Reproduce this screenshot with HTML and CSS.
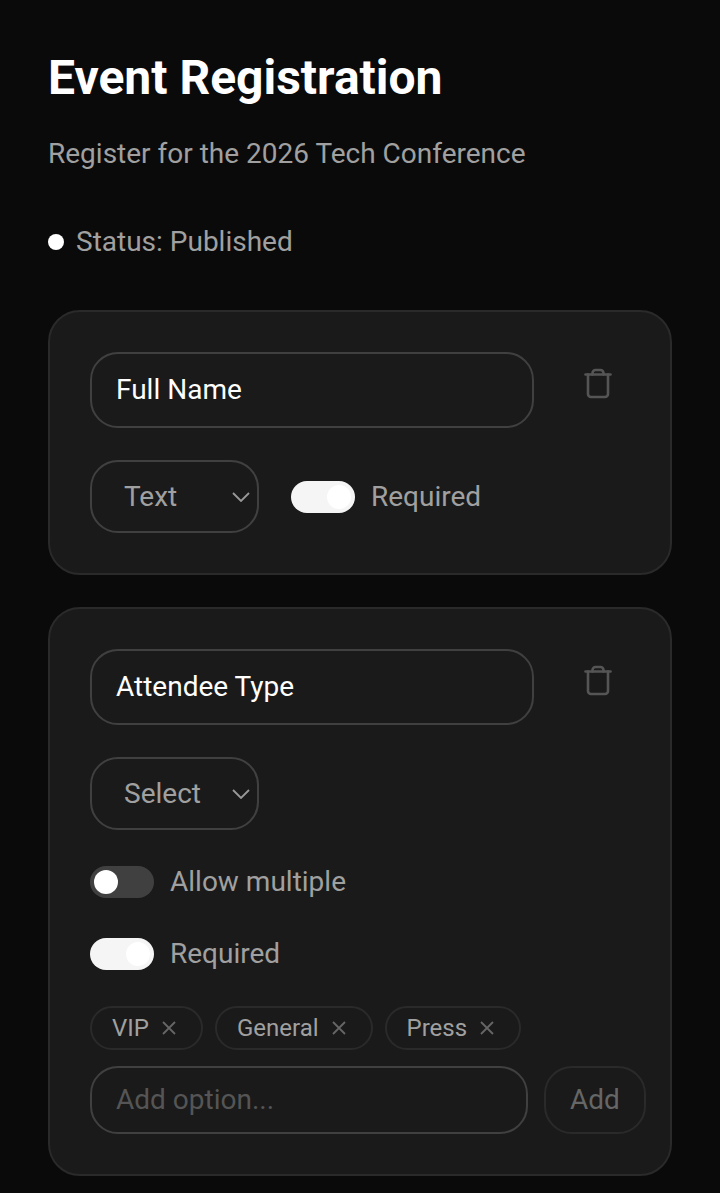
FILE: index.html
```html
<!DOCTYPE html>
<html lang="en">
<head>
    <meta charset="UTF-8">
    <meta name="viewport" content="width=device-width, initial-scale=1.0">
    <title>Event Registration</title>
    <link rel="stylesheet" href="styles.css">
</head>
<body>
    <div class="page">
        <h1>Event Registration</h1>
        <p class="subtitle">Register for the 2026 Tech Conference</p>

        <div class="status">
            <span class="dot"></span>
            <span>Status: Published</span>
        </div>

        <div class="card">
            <div class="name-row">
                <div class="input">Full Name</div>
                <button class="delete" aria-label="Delete field">
                    <svg width="28" height="32" viewBox="0 0 28 32" fill="none" stroke="#555" stroke-width="2.6" stroke-linejoin="round" stroke-linecap="round">
                        <path d="M1.500 6.500h25"/>
                        <path d="M8.500 6.500V5a3 3 0 0 1 3-3h5a3 3 0 0 1 3 3v1.500"/>
                        <path d="M4 6.500V26a3 3 0 0 0 3 3h14a3 3 0 0 0 3-3V6.500"/>
                    </svg>
                </button>
            </div>
            <div class="type-row">
                <div class="select select-text">
                    Text
                    <svg class="chevron" width="18" height="10" viewBox="0 0 18 10" fill="none" stroke="#999" stroke-width="1.8"><path d="M1 1l8 8 8-8"/></svg>
                </div>
                <div class="toggle on"><span class="knob"></span></div>
                <span class="toggle-label">Required</span>
            </div>
        </div>

        <div class="card">
            <div class="name-row">
                <div class="input">Attendee Type</div>
                <button class="delete" aria-label="Delete field">
                    <svg width="28" height="32" viewBox="0 0 28 32" fill="none" stroke="#555" stroke-width="2.6" stroke-linejoin="round" stroke-linecap="round">
                        <path d="M1.500 6.500h25"/>
                        <path d="M8.500 6.500V5a3 3 0 0 1 3-3h5a3 3 0 0 1 3 3v1.500"/>
                        <path d="M4 6.500V26a3 3 0 0 0 3 3h14a3 3 0 0 0 3-3V6.500"/>
                    </svg>
                </button>
            </div>
            <div class="select select-option">
                Select
                <svg class="chevron" width="18" height="10" viewBox="0 0 18 10" fill="none" stroke="#999" stroke-width="1.8"><path d="M1 1l8 8 8-8"/></svg>
            </div>
            <div class="switch-row first">
                <div class="toggle"><span class="knob"></span></div>
                <span class="toggle-label">Allow multiple</span>
            </div>
            <div class="switch-row">
                <div class="toggle on"><span class="knob"></span></div>
                <span class="toggle-label">Required</span>
            </div>
            <div class="chips">
                <span class="chip">VIP <svg width="16" height="16" viewBox="0 0 16 16" stroke="#666" stroke-width="1.800"><path d="M2 2l12 12M14 2L2 14"/></svg></span>
                <span class="chip">General <svg width="16" height="16" viewBox="0 0 16 16" stroke="#666" stroke-width="1.800"><path d="M2 2l12 12M14 2L2 14"/></svg></span>
                <span class="chip">Press <svg width="16" height="16" viewBox="0 0 16 16" stroke="#666" stroke-width="1.800"><path d="M2 2l12 12M14 2L2 14"/></svg></span>
            </div>
            <div class="add-row">
                <div class="input add-input">Add option...</div>
                <button class="add">Add</button>
            </div>
        </div>
    </div>
</body>
</html>
```

FILE: styles.css
```css
* {
    box-sizing: border-box;
}

html, body {
    height: 100%;
}

body {
    margin: 0;
    background-color: #0a0a0a;
    font-family: 'Roboto', sans-serif;
    overflow: hidden;
}

.page {
    padding: 48px 48px 0;
}

h1 {
    margin: 0;
    color: #ffffff;
    font-size: 48px;
    font-weight: 700;
    line-height: 60px;
}

.subtitle {
    margin: 25px 0 0;
    color: #a0a0a0;
    font-size: 28px;
    line-height: 42px;
}

.status {
    display: flex;
    align-items: center;
    gap: 12px;
    margin-top: 46px;
    color: #a0a0a0;
    font-size: 28px;
    line-height: 42px;
}

.dot {
    width: 16px;
    height: 16px;
    border-radius: 50%;
    background-color: #ffffff;
}

.card {
    margin-top: 32px;
    padding: 40px;
    background-color: #1a1a1a;
    border: 2px solid #2a2a2a;
    border-radius: 32px;
}

.status + .card {
    margin-top: 47px;
}

.name-row {
    display: flex;
    align-items: flex-start;
    gap: 32px;
}

.input {
    flex: 1;
    height: 76px;
    padding: 0 24px 2px;
    display: flex;
    align-items: center;
    color: #ffffff;
    font-size: 28px;
    font-weight: 400;
    border: 2px solid #404040;
    border-radius: 28px;
}

.delete {
    width: 64px;
    height: 64px;
    padding: 0;
    display: flex;
    align-items: center;
    justify-content: center;
    background: none;
    border: none;
}

.type-row {
    display: flex;
    align-items: center;
    gap: 32px;
    margin-top: 32px;
}

.select {
    position: relative;
    width: 169px;
    height: 73px;
    display: flex;
    align-items: center;
    color: #a0a0a0;
    font-size: 28px;
    border: 2px solid #404040;
    border-radius: 28px;
}

.select-text {
    padding-left: 32px;
}

.select-option {
    padding-left: 32px;
    margin-top: 32px;
}

.chevron {
    position: absolute;
    right: 7px;
    top: 30px;
}

.toggle {
    position: relative;
    flex: none;
    width: 64px;
    height: 32px;
    background-color: #404040;
    border-radius: 16px;
}

.toggle.on {
    background-color: #f5f5f5;
}

.knob {
    position: absolute;
    top: 4px;
    left: 4px;
    width: 24px;
    height: 24px;
    border-radius: 50%;
    background-color: #ffffff;
}

.toggle.on .knob {
    left: 36px;
}

.toggle-label {
    color: #a0a0a0;
    font-size: 28px;
    line-height: 32px;
}

.type-row .toggle-label {
    margin-left: -16px;
}

.switch-row {
    display: flex;
    align-items: center;
    gap: 16px;
    margin-top: 40px;
}

.switch-row.first {
    margin-top: 36px;
}

.chips {
    display: flex;
    gap: 12px;
    margin-top: 36px;
}

.chip {
    height: 44px;
    padding: 0 24px 0 20px;
    display: flex;
    align-items: center;
    gap: 12px;
    color: #a0a0a0;
    font-size: 24px;
    border: 2px solid #2a2a2a;
    border-radius: 22px;
}

.add-row {
    display: flex;
    gap: 16px;
    margin-top: 16px;
    width: 556px;
}

.add-input {
    height: 68px;
    flex: none;
    width: 438px;
    color: #555555;
}

.add {
    width: 102px;
    height: 68px;
    flex: none;
    padding: 0 0 2px;
    color: #666666;
    font-family: 'Roboto', sans-serif;
    font-size: 28px;
    background: none;
    border: 2px solid #2a2a2a;
    border-radius: 28px;
}
```
